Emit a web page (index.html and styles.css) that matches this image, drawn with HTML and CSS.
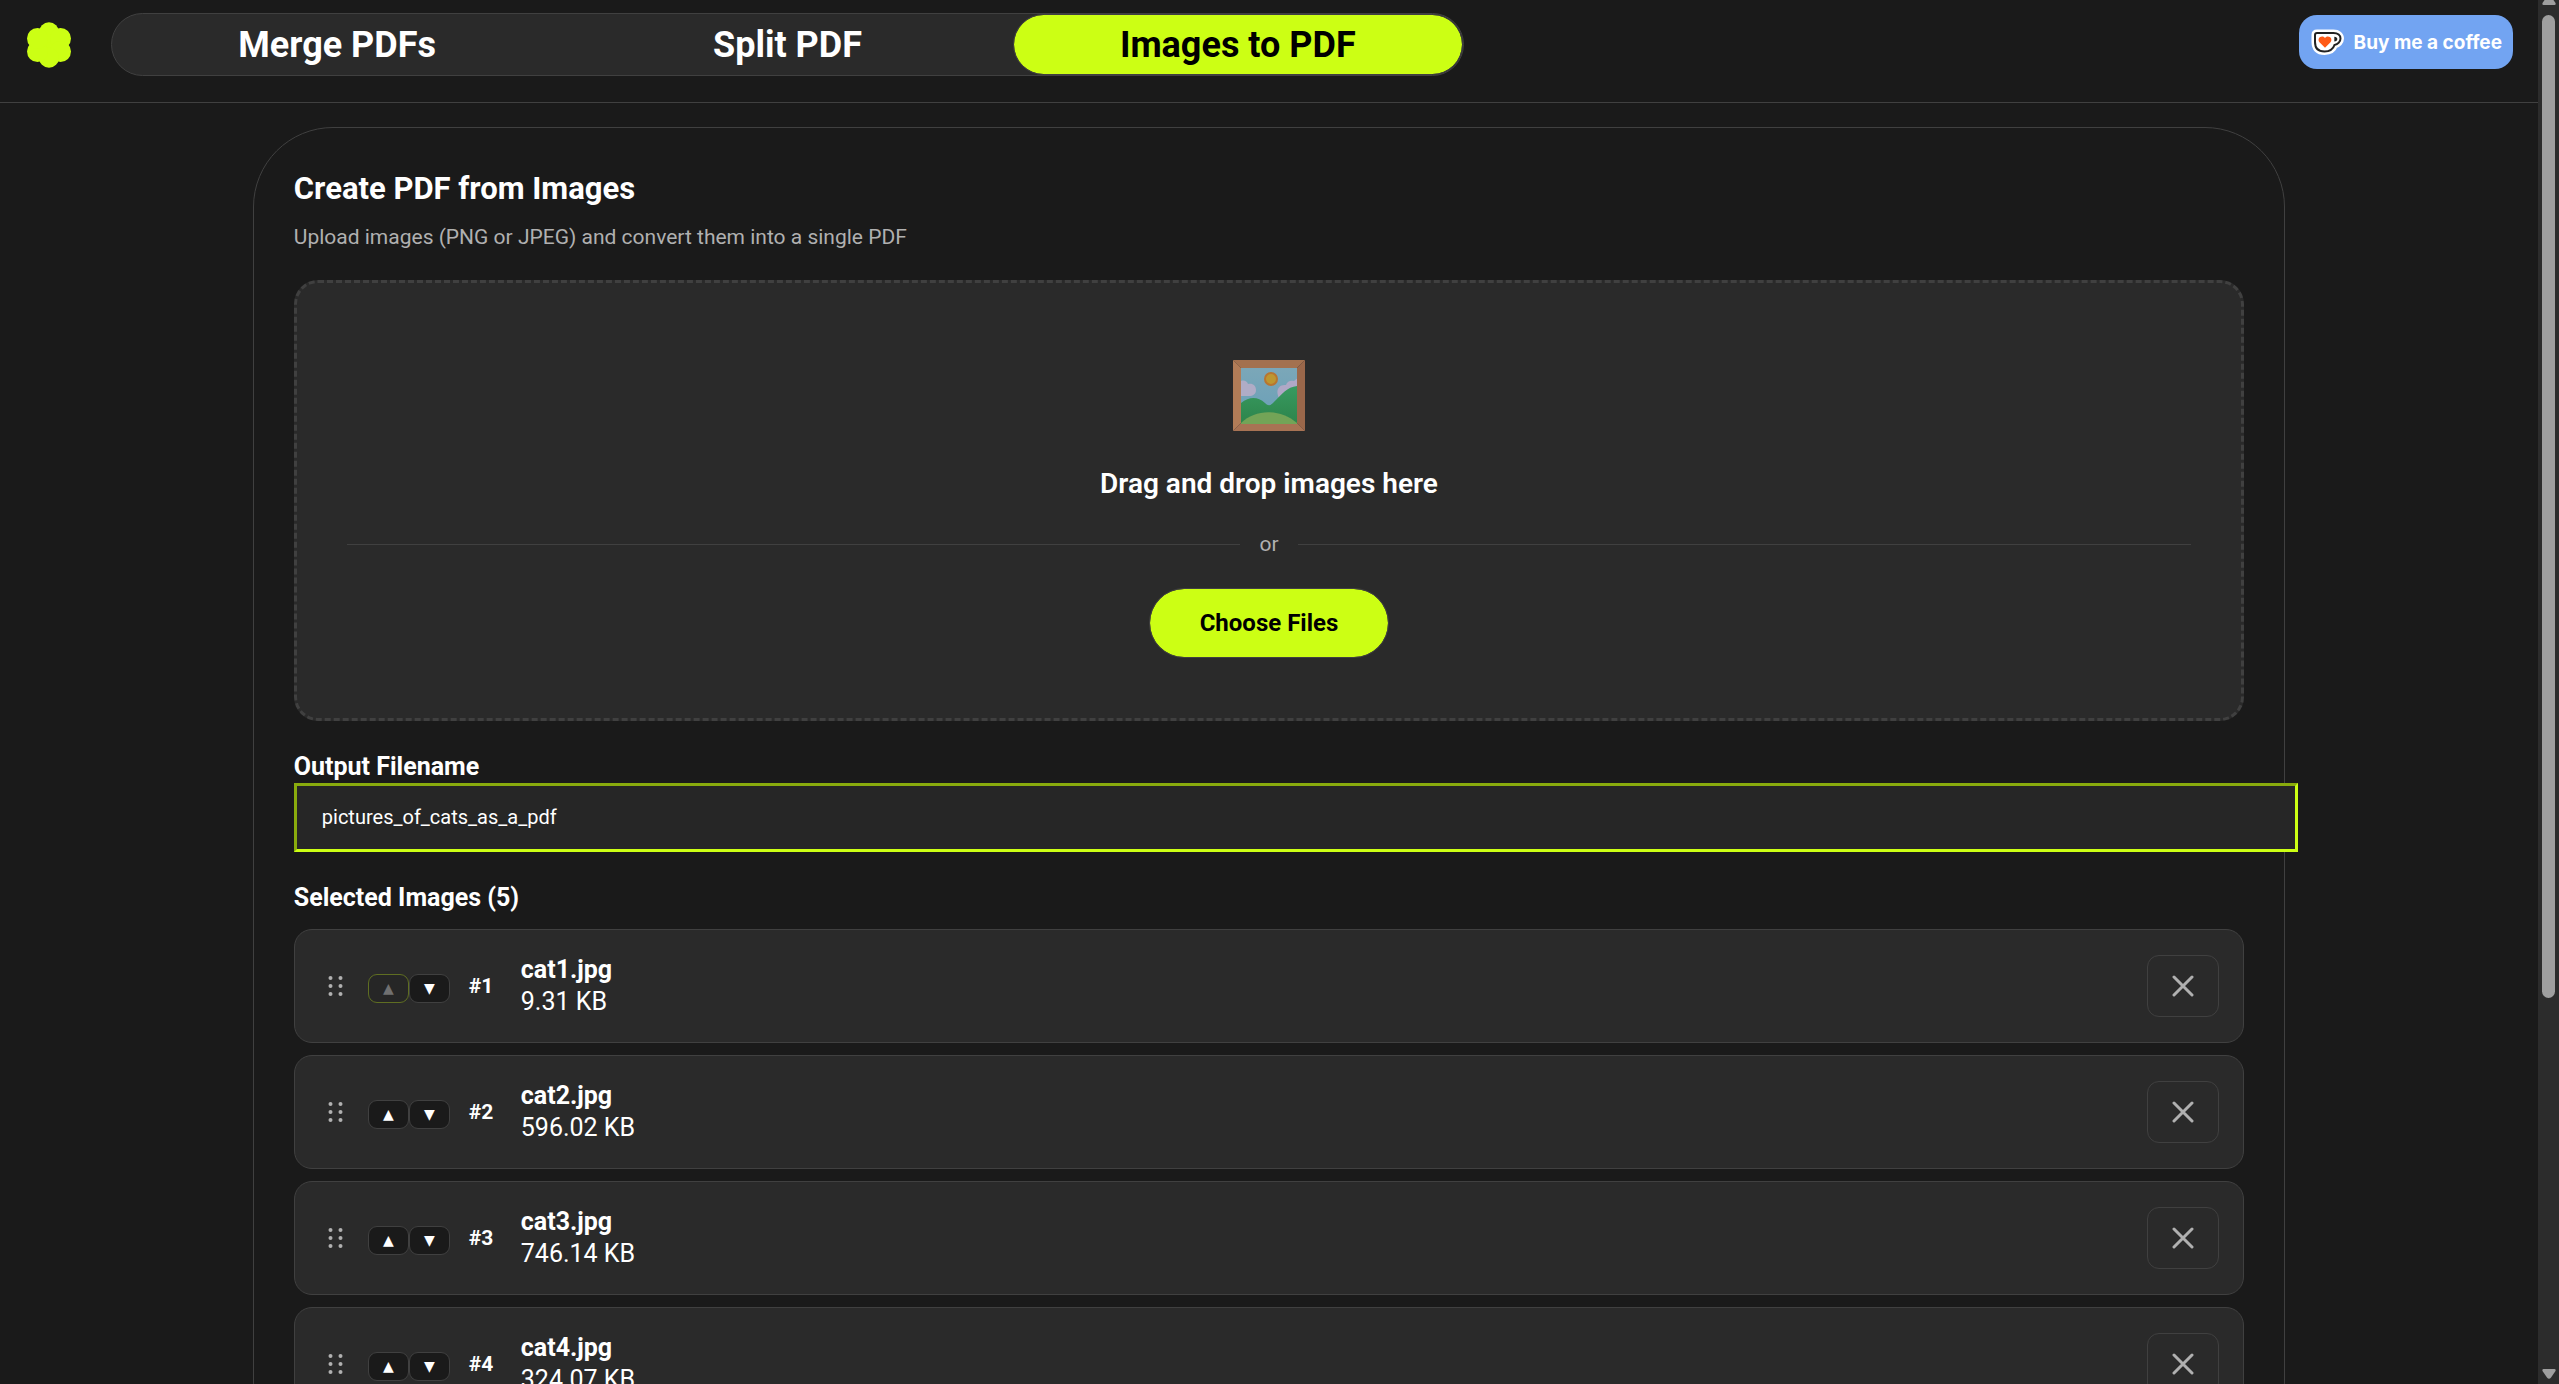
FILE: index.html
```html
<!DOCTYPE html>
<html lang="en">
<head>
  <meta charset="UTF-8">
  <meta name="viewport" content="width=device-width, initial-scale=1.0">
  <title>Images to PDF</title>
  <link rel="stylesheet" href="styles.css">
</head>
<body>
  <div class="page">
    <header class="header">
      <svg class="logo" viewBox="0 0 46 46" aria-hidden="true">
        <circle cx="23" cy="23" r="8"/>
        <circle cx="23" cy="10.3" r="10"/>
        <circle cx="34.5" cy="16.5" r="10.5"/>
        <circle cx="34.5" cy="29.5" r="10.5"/>
        <circle cx="23" cy="35.7" r="10"/>
        <circle cx="11.5" cy="29.5" r="10.5"/>
        <circle cx="11.5" cy="16.5" r="10.5"/>
      </svg>
      <nav class="tabs">
        <button type="button" class="tab">Merge PDFs</button>
        <button type="button" class="tab">Split PDF</button>
        <button type="button" class="tab active">Images to PDF</button>
      </nav>
      <a class="coffee" href="#">
        <svg class="cup" viewBox="0 0 33 27" aria-hidden="true">
          <path class="cup-edge" d="M6 4H22.5c4.500 0 7 2.500 7 5.500s-2.500 6-6 6.500c-1.500 4.500-5 6.500-10 6.500C7 22.500 4 19 4 13V6q0-2 2-2z"/>
          <path class="cup-body" d="M6 4H22.500c4.500 0 7 2.500 7 5.500s-2.500 6-6 6.500c-1.500 4.500-5 6.500-10 6.500C7 22.500 4 19 4 13V6q0-2 2-2z"/>
          <path class="cup-hole" d="M23.300 7.800c4 0 4 4.600 0 4.800z"/>
          <path class="cup-heart" d="M14 18.800L8.500 13.200C5.500 9.500 10.500 5.300 14 8.900 17.500 5.300 22.500 9.500 19.500 13.200z"/>
        </svg>
        <span>Buy me a coffee</span>
      </a>
    </header>

    <main class="card">
      <div class="card-body">
        <h1>Create PDF from Images</h1>
        <p class="subtitle">Upload images (PNG or JPEG) and convert them into a single PDF</p>

        <div class="dropzone">
          <svg class="picture" viewBox="0 0 72 71" aria-hidden="true">
            <defs>
              <linearGradient id="sky" x1="0" y1="0" x2="0" y2="1">
                <stop offset="0" stop-color="#7ba7b8"/>
                <stop offset="1" stop-color="#699fb8"/>
              </linearGradient>
              <linearGradient id="hill" x1="0" y1="0" x2="0" y2="1">
                <stop offset="0" stop-color="#389a60"/>
                <stop offset="1" stop-color="#2c834a"/>
              </linearGradient>
              <clipPath id="canvas"><rect x="8" y="8" width="56" height="56"/></clipPath>
            </defs>
            <path fill="#a3714f" d="M0 0h72l-8 8H8z"/>
            <path fill="#b17c57" d="M0 0l8 8v55l-8 8z"/>
            <path fill="#9a674a" d="M72 0v71l-8-8V8z"/>
            <path fill="#a87354" d="M0 71l8-8h56l8 8z"/>
            <g clip-path="url(#canvas)">
              <rect x="8" y="8" width="56" height="56" fill="url(#sky)"/>
              <path fill="#b0acc6" d="M6 36V22c4-3 8-1 9 2 5-1 8 2 8 6s-3 6-7 6z"/>
              <path fill="#b0a8c6" d="M46 38c-4-8 0-14 7-13 1-4 5-5 8-4l5-4v22z"/>
              <circle cx="38" cy="19" r="6" fill="#bd9730" stroke="#b8752f" stroke-width="2"/>
              <path fill="url(#hill)" d="M8 43c9-7 17-6 24 0 3 3 5 3 8 0 9-9 14-16 24-17v40H8z"/>
              <path fill="#73a457" d="M6 65c15-17 43-17 60 0z"/>
            </g>
          </svg>
          <p class="drop-text">Drag and drop images here</p>
          <div class="divider"><span>or</span></div>
          <button type="button" class="choose">Choose Files</button>
        </div>

        <label class="label" for="filename">Output Filename</label>
        <input class="filename" type="text" id="filename" value="pictures_of_cats_as_a_pdf">

        <h2>Selected Images (5)</h2>
        <ul class="files" id="files"></ul>
      </div>
    </main>
  </div>

  <div class="scrollbar" aria-hidden="true">
    <svg class="arrow-up" viewBox="0 0 14 10"><path d="M5 1.500Q7-1 9 1.500L13.500 8Q14 10 12.500 10H1.500Q0 10 .5 8z"/></svg>
    <div class="thumb"></div>
    <svg class="arrow-down" viewBox="0 0 14 10"><path d="M5 8.500Q7 11 9 8.500L13.500 2Q14 0 12.500 0H1.500Q0 0 .5 2z"/></svg>
  </div>

  <script>
    const files = [
      { name: 'cat1.jpg', size: '9.31 KB' },
      { name: 'cat2.jpg', size: '596.02 KB' },
      { name: 'cat3.jpg', size: '746.14 KB' },
      { name: 'cat4.jpg', size: '324.07 KB' }
    ];

    // Build one row per selected image
    document.getElementById('files').innerHTML = files.map((file, i) => `
      <li class="file">
        <svg class="handle" viewBox="0 0 14 20" aria-hidden="true">
          <circle cx="2" cy="2" r="2"/><circle cx="12" cy="2" r="2"/>
          <circle cx="2" cy="10" r="2"/><circle cx="12" cy="10" r="2"/>
          <circle cx="2" cy="18" r="2"/><circle cx="12" cy="18" r="2"/>
        </svg>
        <div class="moves">
          <button type="button" class="move" aria-label="Move up" ${i === 0 ? 'disabled' : ''}>▲</button>
          <button type="button" class="move" aria-label="Move down">▼</button>
        </div>
        <span class="order">#${i + 1}</span>
        <div class="info">
          <strong>${file.name}</strong>
          <span>${file.size}</span>
        </div>
        <button type="button" class="remove" aria-label="Remove ${file.name}">
          <svg viewBox="0 0 22 22"><path d="M2 2l18 18M20 2L2 20"/></svg>
        </button>
      </li>`).join('');
  </script>
</body>
</html>
```
FILE: styles.css
```css
* {
  box-sizing: border-box;
}

body {
  margin: 0;
  height: 100vh;
  overflow: hidden;
  display: grid;
  grid-template-columns: 1fr 21px;
  background: #1a1a1a;
  color: #fff;
  font-family: Roboto, "Noto Sans", sans-serif;
}

button {
  font-family: inherit;
  cursor: pointer;
}

.page {
  min-width: 0;
  height: 100vh;
  overflow: hidden;
}

/* Header */
.header {
  display: flex;
  align-items: center;
  padding: 13px 25px 26px 26px;
  border-bottom: 1px solid #404040;
}

.logo {
  width: 46px;
  height: 46px;
  margin-right: 39px;
  fill: #ccff14;
}

.tabs {
  display: flex;
  width: 54.4%;
  background: #2a2a2a;
  border: 1px solid #404040;
  border-radius: 32px;
}

.tab {
  flex: 1;
  padding: 9px 8px 7px;
  background: none;
  border: 1px solid transparent;
  border-radius: 32px;
  color: #fff;
  font-size: 36px;
  font-weight: 700;
  line-height: 43px;
}

.tab.active {
  background: #ccff14;
  background-clip: padding-box;
  border-color: #404040;
  color: #000;
}

.coffee {
  display: flex;
  align-items: center;
  align-self: flex-start;
  gap: 10px;
  height: 54px;
  margin: 2px 0 0 auto;
  padding: 0 11px 0 12px;
  background: #72a4f2;
  border-radius: 18px;
  color: #fff;
  font-family: Inter, sans-serif;
  font-size: 19px;
  font-weight: 700;
  text-decoration: none;
}

.cup {
  width: 33px;
  height: 27px;
  overflow: visible;
}

.cup-edge {
  fill: #fff;
  stroke: #fff;
  stroke-width: 7;
}

.cup-body {
  fill: #fff;
  stroke: #222;
  stroke-width: 2;
}

.cup-hole {
  fill: #222;
}

.cup-heart {
  fill: #ff5a16;
}

/* Card */
.card {
  box-sizing: content-box;
  width: 80%;
  margin: 24px auto;
  border: 1px solid #404040;
  border-radius: 80px;
}

.card-body {
  padding: 41px 40px 40px;
}

h1 {
  margin: 0 0 11px;
  font-size: 31px;
  line-height: 40px;
}

.subtitle {
  margin: 0 0 26px;
  color: #b0b0b0;
  font-size: 21px;
  line-height: 34px;
}

.dropzone {
  display: flex;
  flex-direction: column;
  align-items: center;
  padding: 77px 50px 60px;
  background: #2a2a2a;
  border: 3px dashed #404040;
  border-radius: 24px;
}

.picture {
  width: 72px;
  height: 71px;
}

.drop-text {
  margin: 33px 0 24px;
  font-size: 28px;
  font-weight: 600;
  line-height: 40px;
}

.divider {
  display: flex;
  align-items: center;
  gap: 19px;
  width: 100%;
  margin-bottom: 28px;
  color: #b0b0b0;
  font-size: 21px;
  line-height: 32px;
}

.divider::before,
.divider::after {
  content: "";
  flex: 1;
  height: 1px;
  background: #404040;
}

.choose {
  padding: 18px 50px;
  background: #ccff14;
  border: 1px solid #404040;
  background-clip: padding-box;
  border-radius: 36px;
  color: #000;
  font-size: 24px;
  font-weight: 700;
  line-height: 32px;
}

.label {
  display: block;
  margin-top: 30px;
  font-size: 25px;
  font-weight: 700;
  line-height: 32px;
}

.filename {
  display: block;
  width: calc(100% + 54px);
  padding: 19px 25px;
  background: #262626;
  border: 3px inset #ccff14;
  color: #fff;
  font-family: inherit;
  font-size: 20px;
  line-height: 25px;
  outline: none;
}

h2 {
  margin: 26px 0 11px;
  font-size: 25px;
  line-height: 40px;
}

/* Selected files */
.files {
  display: flex;
  flex-direction: column;
  gap: 12px;
  margin: 0;
  padding: 0;
  list-style: none;
}

.file {
  display: flex;
  align-items: center;
  gap: 16px;
  padding: 24px;
  background: #2a2a2a;
  border: 1px solid #404040;
  border-radius: 18px;
}

.handle {
  width: 33px;
  height: 20px;
  fill: #b0b0b0;
}

.moves {
  display: flex;
  margin: 4px 3px 0 0;
}

.move {
  width: 41px;
  height: 29px;
  padding: 0;
  background: #1a1a1a;
  border: 1px solid #404040;
  border-radius: 9px;
  color: #fff;
  font-family: "DejaVu Sans", sans-serif;
  font-size: 14px;
  line-height: 25px;
}

.move:disabled {
  background: #262626;
  border-color: #5f6e22;
  color: #707070;
}

.order {
  width: 36px;
  font-size: 21px;
  font-weight: 700;
}

.info {
  display: flex;
  flex: 1;
  flex-direction: column;
  font-size: 25px;
  line-height: 32px;
}

.remove {
  display: flex;
  align-items: center;
  justify-content: center;
  width: 72px;
  height: 62px;
  background: none;
  border: 1px solid #404040;
  border-radius: 12px;
}

.remove svg {
  width: 22px;
  height: 22px;
  stroke: #b0b0b0;
  stroke-width: 3;
  stroke-linecap: round;
}

/* Scrollbar */
.scrollbar {
  display: flex;
  flex-direction: column;
  align-items: center;
  height: 100vh;
  padding-bottom: 5px;
  background: #2c2c2c;
  fill: #9f9f9f;
}

.arrow-up,
.arrow-down {
  width: 14px;
  height: 10px;
}

.arrow-up {
  margin-top: -5px;
}

.thumb {
  width: 13px;
  height: 71.3%;
  margin: 10px 0 auto;
  background: #9f9f9f;
  border-radius: 7px;
}
```
